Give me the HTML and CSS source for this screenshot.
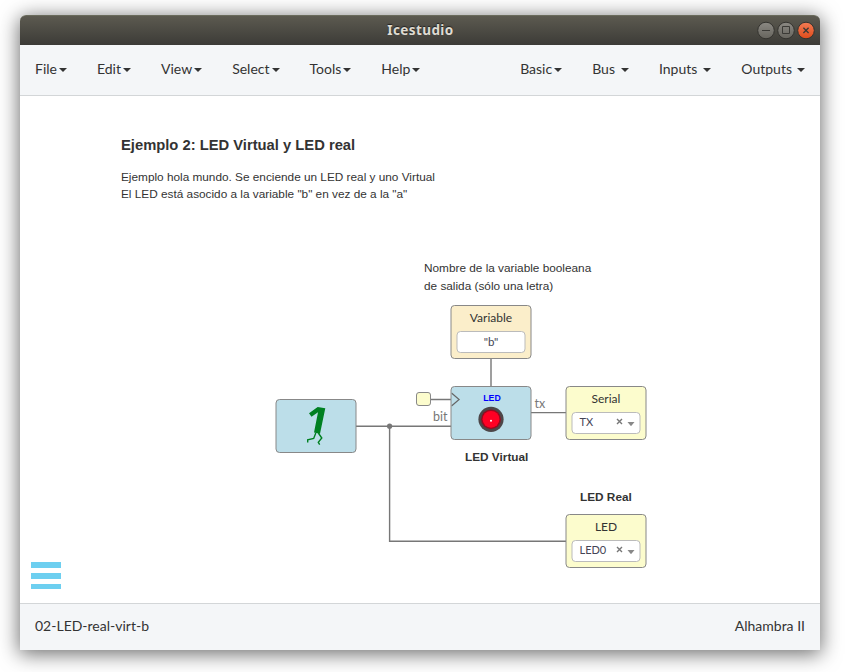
FILE: index.html
```html
<!DOCTYPE html>
<html lang="en">
<head>
<meta charset="utf-8">
<title>Icestudio</title>
<link rel="stylesheet" href="styles.css">
</head>
<body>
<div class="window">
  <header class="titlebar">
    <span class="app-name">Icestudio</span>
    <svg class="controls" width="60" height="22" viewBox="0 0 60 22">
      <defs>
        <linearGradient id="gray" x2="0" y2="1"><stop stop-color="#8b8983"/><stop offset="1" stop-color="#66645d"/></linearGradient>
        <linearGradient id="orange" x2="0" y2="1"><stop stop-color="#f37c54"/><stop offset="1" stop-color="#df4b1b"/></linearGradient>
      </defs>
      <g stroke="#34332f"><circle cx="10" cy="10.500" r="8.3" fill="url(#gray)"/><circle cx="30" cy="10.500" r="8.3" fill="url(#gray)"/><circle cx="50" cy="10.500" r="8.3" fill="url(#orange)"/></g>
      <g fill="none" stroke="#3b3a36"><path d="M6 10.5h8M26.5 6.5h7v7h-7z"/><path d="M47.4 7.800l5.200 5.200m0-5.200l-5.200 5.200" stroke-width="1.3"/></g>
    </svg>
  </header>
  <nav class="menubar">
    <ul class="menu">
      <li>File<i class="caret"></i></li><li>Edit<i class="caret"></i></li><li>View<i class="caret"></i></li><li>Select<i class="caret"></i></li><li>Tools<i class="caret"></i></li><li>Help<i class="caret"></i></li>
    </ul>
    <ul class="menu">
      <li>Basic<i class="caret"></i></li><li class="wide">Bus<i class="caret"></i></li><li class="wide">Inputs<i class="caret"></i></li><li class="wide">Outputs<i class="caret"></i></li>
    </ul>
  </nav>
  <main class="canvas">
    <svg class="wires" width="800" height="507" viewBox="20 96 800 507">
      <g fill="none" stroke="#777" stroke-width="1.4"><path d="M491 358v30M356 426.3h95M389.6 426v115.2H566M430 399.5h21M531 412.6h35"/></g>
      <circle cx="389.6" cy="426.2" r="2.6" fill="#777"/>
    </svg>
    <div class="note intro">
      <h1>Ejemplo 2: LED Virtual y LED real</h1>
      <p>Ejemplo hola mundo. Se enciende un LED real y uno Virtual<br>El LED está asocido a la variable "b" en vez de a la "a"</p>
    </div>
    <p class="note hint">Nombre de la variable booleana<br>de salida (sólo una letra)</p>
    <div class="block variable"><span class="label">Variable</span><span class="field center">"b"</span></div>
    <div class="block one">
      <svg width="79" height="52" viewBox="276.500 400 79 52">
        <path d="M309 413.200L317.700 407L325.300 408.300L320 433.800L314 432.500L318 412.300L311.500 416.700Z" fill="#008021"/>
        <path d="M315.800 433L313.700 438.4L307.700 439.900V442.500M318.300 433L321.800 438L318.300 442.300L319.700 444.600" fill="none" stroke="#008021" stroke-width="1.4"/>
      </svg>
    </div>
    <div class="block virtual">
      <svg width="79" height="52" viewBox="451.500 387 79 52">
        <path d="M451.500 393l7.600 6.500l-7.600 6.500" fill="none" stroke="#666" stroke-width="1.200"/>
        <circle cx="491" cy="419.300" r="12.600" fill="#4c4648"/>
        <circle cx="491" cy="419.300" r="9.900" fill="#97091f"/>
        <circle cx="491" cy="419.300" r="8.400" fill="#ff0024"/>
        <circle cx="491" cy="420.800" r="1" fill="#fff"/>
      </svg>
      <span class="led-text">LED</span>
    </div>
    <div class="port"></div>
    <span class="pin bit">bit</span>
    <span class="pin tx">tx</span>
    <div class="block serial"><span class="label">Serial</span><span class="field">TX<svg class="select-marks" width="20" height="12" viewBox="0 0 20 12"><path d="M1.500 3l5 5m0-5L1.500 8" stroke="#777" stroke-width="1.400"/><path d="M12 6h7l-3.500 4.300z" fill="#888"/></svg></span></div>
    <div class="block led"><span class="label">LED</span><span class="field">LED0<svg class="select-marks" width="20" height="12" viewBox="0 0 20 12"><path d="M1.500 3l5 5m0-5L1.500 8" stroke="#777" stroke-width="1.400"/><path d="M12 6h7l-3.500 4.300z" fill="#888"/></svg></span></div>
    <b class="note caption-virtual">LED Virtual</b>
    <b class="note caption-real">LED Real</b>
    <div class="burger"><i></i><i></i><i></i></div>
  </main>
  <footer class="status"><span>02-LED-real-virt-b</span><span>Alhambra II</span></footer>
</div>
</body>
</html>
```
FILE: styles.css
```css
* { box-sizing: border-box; }
body { margin: 0; padding: 15px 26px 22px 20px; background: #fff; font: 14px/20px Lato, sans-serif; color: #333; overflow: hidden; }
.window { width: 800px; height: 635px; display: flex; flex-direction: column; border-radius: 6px 6px 0 0; box-shadow: 0 3px 20px 1px rgba(0,0,0,.58); }
.titlebar { height: 30px; display: grid; grid-template-columns: 64px 1fr 64px; align-items: center; border-radius: 6px 6px 0 0; background: linear-gradient(#5c5a50, #3c3b37); border-top: 1px solid #6a6b5c; }
.app-name { grid-column: 2; padding: 0 0 2px 1px; text-align: center; font: bold 13.5px/26px "Noto Sans", sans-serif; letter-spacing: .4px; color: #dfdbd2; text-shadow: 0 -1px 1px #222; }
.menubar { height: 51px; display: flex; justify-content: space-between; align-items: center; padding: 0 15px 2px; background: #f4f6f8; border-bottom: 1px solid #d3d6d8; }
.menu { display: flex; gap: 30px; margin: 0; padding: 0; list-style: none; }
.menu li { display: flex; align-items: center; gap: 2px; }
.menu .wide { gap: 6px; }
.menu .wide:last-child { gap: 5px; }
.caret { border: 4px solid transparent; border-top-color: #333; border-bottom: 0; margin-top: 2px; }
.canvas { height: 507px; position: relative; background: #fff; }
.wires { position: absolute; inset: 0; }
.note { position: absolute; margin: 0; font-family: "Liberation Sans", sans-serif; font-size: 11.8px; line-height: 17.6px; white-space: nowrap; }
.intro { left: 101px; top: 39px; }
.intro h1 { margin: 0 0 14px; font-size: 14.75px; line-height: 20px; }
.intro p { margin: 0; line-height: 17px; }
.hint { left: 404px; top: 164px; }
.block { position: absolute; width: 81px; height: 54px; border: 1px solid #888; border-radius: 4px; transform: translateX(.5px); }
.block > svg { display: block; }
.variable { left: 430px; top: 209px; background: #fbeeca; }
.one { left: 255px; top: 303px; background: #bcdee9; }
.virtual { left: 430px; top: 290px; background: #bcdee9; }
.serial { left: 545px; top: 290px; background: #fcfccd; }
.led { left: 545px; top: 418px; background: #fcfccd; }
.label { display: block; margin-top: 3px; font-size: 12px; line-height: 18px; text-align: center; }
.field { display: flex; justify-content: space-between; align-items: center; height: 22px; margin: 4px 5px 0; padding: 0 4px 2px 7px; background: #fff; border: 1px solid #bbb; border-radius: 4px; font-size: 11px; color: #445; }
.field.center { justify-content: center; padding: 0 0 1px; font-size: 11.500px; }
.led-text { position: absolute; left: 1px; top: 5px; width: 100%; text-align: center; font: bold 8.800px/12px "Liberation Sans", sans-serif; color: #00f; }
.port { position: absolute; left: 396px; top: 296px; width: 15px; height: 14px; background: #fcfccd; border: 1px solid #888; border-radius: 3px; }
.pin { position: absolute; font-size: 12.5px; line-height: 16px; color: #777; }
.bit { left: 413px; top: 313px; }
.tx { left: 514.500px; top: 300px; }
.caption-virtual { left: 445px; top: 353px; }
.caption-real { left: 560px; top: 393px; }
.burger { position: absolute; left: 11px; top: 466px; display: flex; flex-direction: column; gap: 5px; }
.burger i { width: 30px; height: 6px; background: #6dcff0; }
.burger i:last-child { height: 5px; }
.status { height: 47px; display: flex; justify-content: space-between; align-items: center; padding: 0 15px 2px; border-top: 1px solid #d3d6d8; background: #f4f6f8; }
```
